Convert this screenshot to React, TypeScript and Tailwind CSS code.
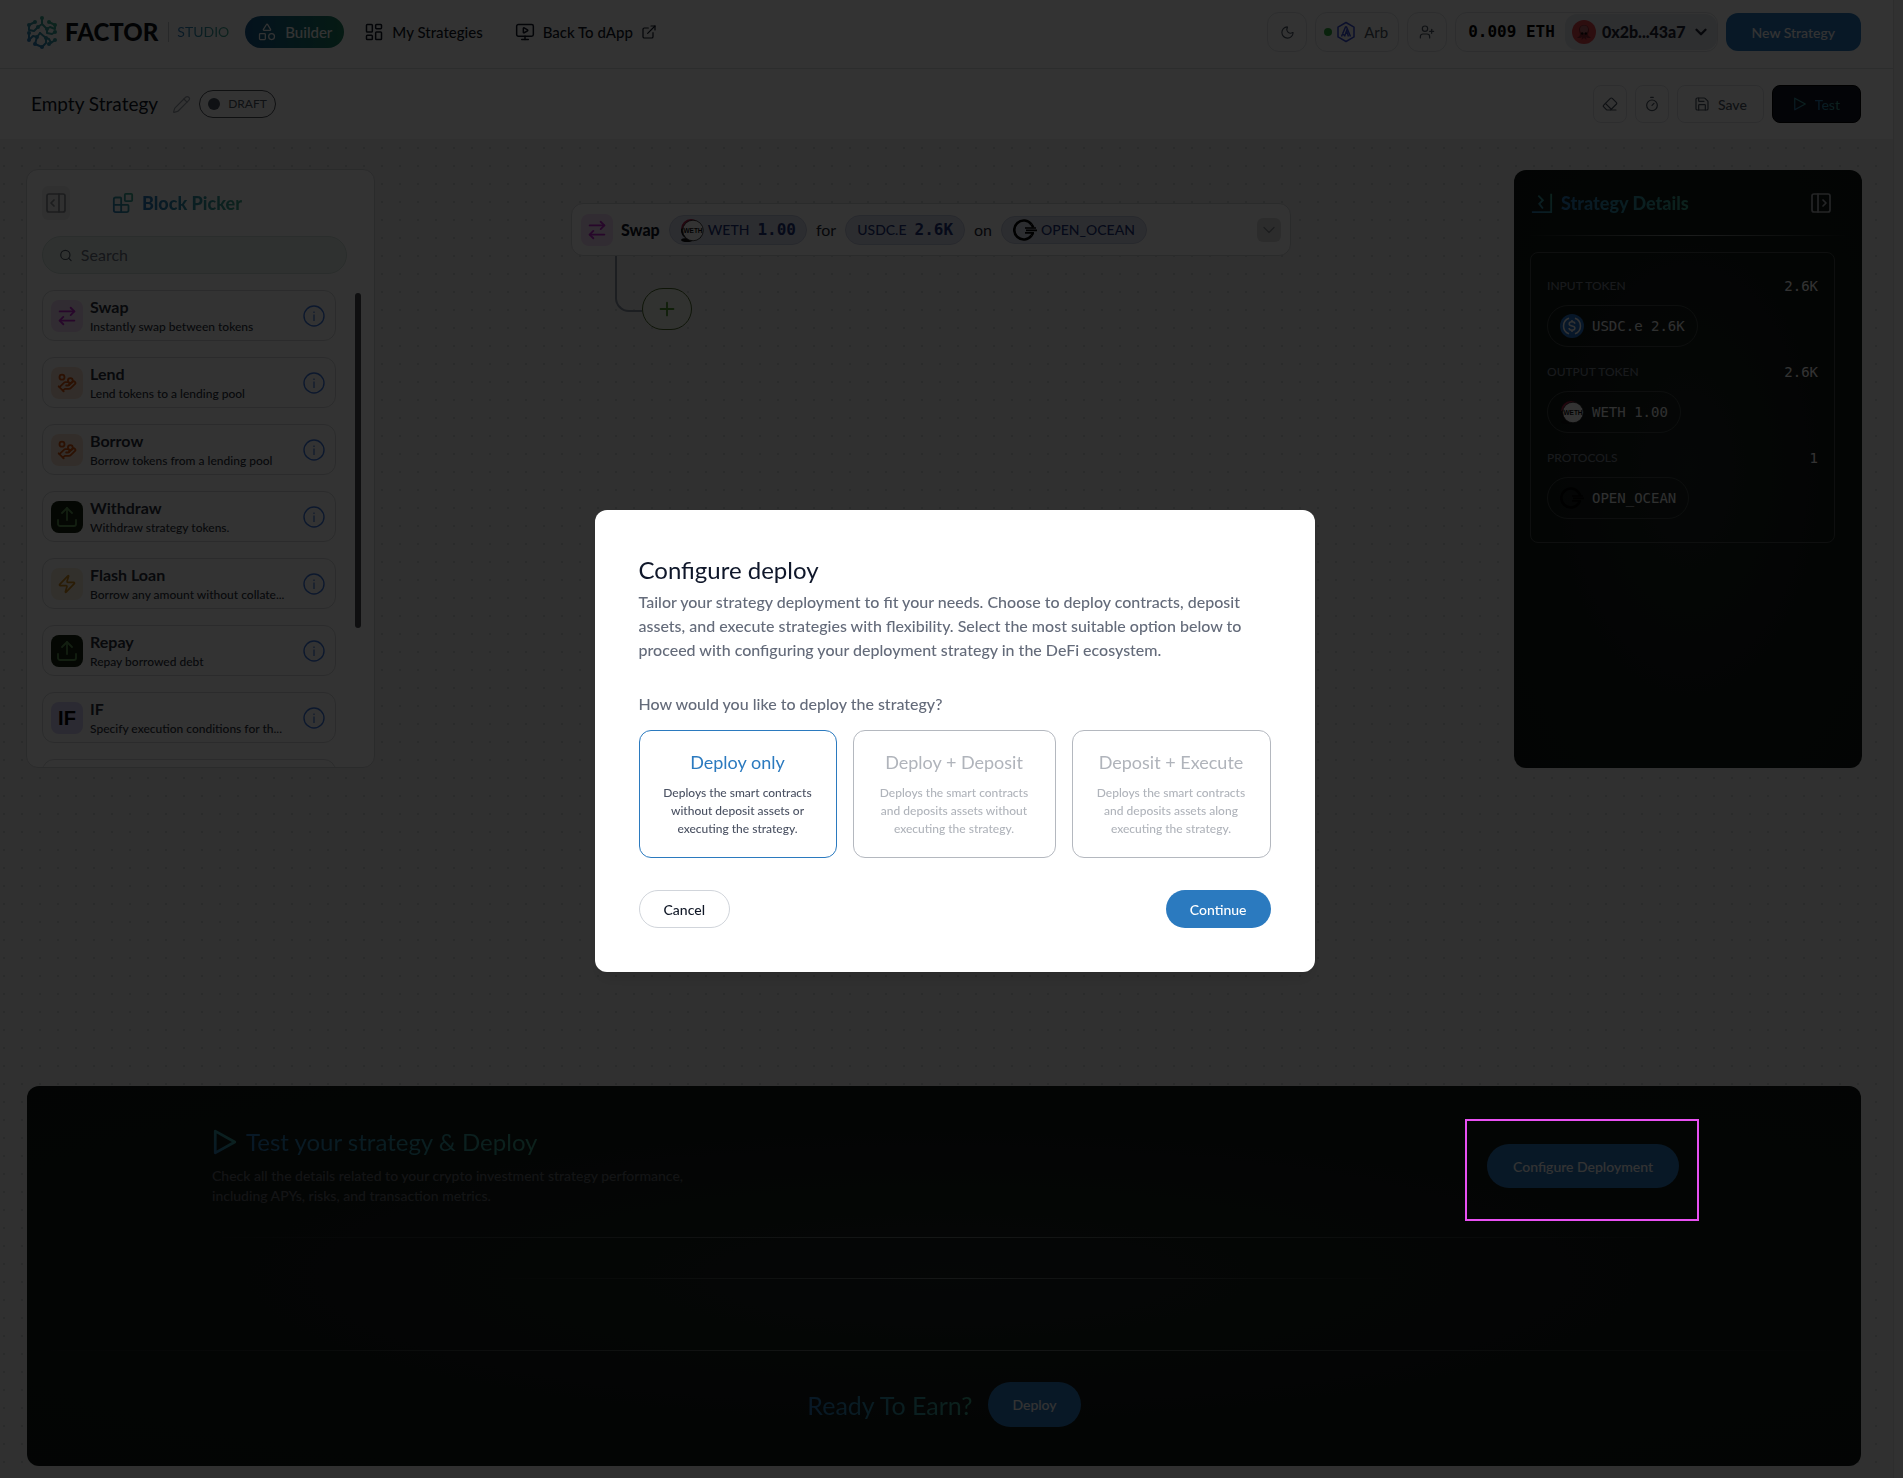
import type { ReactNode } from "react";
import {
  ArrowRightLeft,
  Blocks,
  ChevronDown,
  Eraser,
  ExternalLink,
  HandCoins,
  LayoutDashboard,
  MonitorPlay,
  Moon,
  PanelLeftOpen,
  PanelRightOpen,
  Pencil,
  Plus,
  Save,
  Search,
  Shapes,
  Timer,
  Upload,
  UserPlus,
  Zap,
} from "lucide-react";

const gradientText =
  "bg-gradient-to-r from-[#2b7abf] to-[#3fa98d] bg-clip-text text-transparent";
const mono = "font-['DejaVu_Sans_Mono',monospace]";

function GradientDefs() {
  return (
    <svg width="0" height="0" className="absolute" aria-hidden="true">
      <defs>
        <linearGradient id="brand" gradientUnits="userSpaceOnUse" x1="0" y1="24" x2="24" y2="0">
          <stop offset="0" stopColor="#2b7abf" />
          <stop offset="1" stopColor="#3fb58d" />
        </linearGradient>
      </defs>
    </svg>
  );
}

function LogoMark() {
  const nodes = [
    [15, 2], [8, 6], [22, 6], [2, 9], [28, 9], [2, 17], [28, 16], [2, 24],
    [28, 24], [8, 28], [22, 28], [15, 31], [11, 11], [20, 13], [10, 21], [19, 22],
  ];
  return (
    <svg width="30" height="33" viewBox="0 0 30 33" fill="none" aria-hidden="true">
      <defs>
        <linearGradient id="logo" gradientUnits="userSpaceOnUse" x1="4" y1="30" x2="26" y2="3">
          <stop offset="0" stopColor="#2b7abf" />
          <stop offset="1" stopColor="#3fb58d" />
        </linearGradient>
      </defs>
      <g stroke="url(#logo)" strokeWidth="2" strokeLinecap="round" strokeLinejoin="round">
        <path d="M15 2v6l-4 3M8 6l-6 3v5l5 1 4-4M2 17v7l4-4 4 1 3-4" />
        <path d="M22 6l6 3v4l-5-2-3 2v4l5 1 3-2M28 24l-4 3-2-4-3-1M10 21l-2 7 7 3 4-4v-5" />
        <path d="M15 8l5 5M13 17l6 5" />
      </g>
      <g fill="url(#logo)">
        {nodes.map(([x, y]) => (
          <circle key={`${x}-${y}`} cx={x} cy={y} r="2" />
        ))}
      </g>
    </svg>
  );
}

function ArbIcon() {
  return (
    <svg width="20" height="22" viewBox="0 0 20 22" fill="none" stroke="#3b4fd8" aria-hidden="true">
      <path d="M10 1.500l8 4.600v9.800l-8 4.600-8-4.600V6.100z" strokeWidth="1.500" strokeLinejoin="round" />
      <path d="M5.500 15.500L9.500 6h1L14.500 15.500M8.500 15.500L10.500 10l2 5.500M6.500 11.500l1.500 3" strokeWidth="1.500" />
    </svg>
  );
}

function Avatar() {
  return (
    <svg width="24" height="24" viewBox="0 0 24 24" aria-hidden="true">
      <circle cx="12" cy="12" r="12" fill="#e2464d" />
      <path d="M12 5c-3.200 0-5 2.200-5 5 0 2 1 3 1 4.500S6 17 5 17.500c2 1 4 .5 5-.5l-.5 3 2.500-2 2.500 2-.5-3c1 1 3 1.500 5 .5-1-.5-3-1.500-3-3s1-2.500 1-4.500c0-2.800-1.800-5-5-5z" fill="#8d2b33" />
      <ellipse cx="12" cy="9.500" rx="4" ry="4" fill="#b8666a" />
      <circle cx="10.200" cy="13.500" r="1.200" fill="#14090a" />
      <circle cx="13.800" cy="13.500" r="1.200" fill="#14090a" />
    </svg>
  );
}

function WethIcon() {
  return (
    <svg width="24" height="24" viewBox="0 0 24 24" aria-hidden="true">
      <circle cx="11" cy="11" r="10" fill="#b02049" />
      <path d="M1 11a10 10 0 0 0 6 10l14-1-4-16z" fill="#111" />
      <ellipse cx="7" cy="22" rx="6" ry="2" fill="#111" />
      <circle cx="13" cy="12.500" r="10.300" fill="#fff" stroke="#222" strokeWidth=".8" />
      <text x="13" y="15" textAnchor="middle" fontSize="6.500" fontWeight="700" fontFamily="Liberation Sans, sans-serif" fill="#111">
        WETH
      </text>
    </svg>
  );
}

function UsdcIcon() {
  return (
    <svg width="24" height="24" viewBox="0 0 24 24" fill="none" stroke="#fff" strokeWidth="1.500" aria-hidden="true">
      <circle cx="12" cy="12" r="12" fill="#2775ca" stroke="none" />
      <path d="M9 4.200a8.300 8.300 0 0 0 0 15.600M15 4.200a8.300 8.300 0 0 1 0 15.600" />
      <path d="M14.800 9.800c0-1.300-1.200-2-2.800-2s-2.800.8-2.800 2.100c0 2.900 5.700 1.300 5.700 4.200 0 1.300-1.200 2.100-2.900 2.100s-2.900-.8-2.900-2.100M12 6v1.800M12 16.200V18" />
    </svg>
  );
}

function OceanIcon() {
  return (
    <svg width="24" height="24" viewBox="0 0 24 24" fill="none" stroke="#000" aria-hidden="true">
      <path d="M18.500 6.500a9.500 9.500 0 1 0 0 11" strokeWidth="2.600" />
      <path d="M18.500 6.500q1.500 2 1.700 3M18.500 17.500q1.200-1.500 1.500-2.500" strokeWidth="2.600" />
      <path d="M12 10h11M12 14.800h9M13 12.400h11" strokeWidth="1.700" />
    </svg>
  );
}

function DetailsIcon() {
  return (
    <svg width="22" height="22" viewBox="0 0 24 24" fill="none" stroke="url(#brand)" strokeWidth="2" aria-hidden="true">
      <path d="M1 22h21V2M8 4l5 5-4 4 4 5" />
    </svg>
  );
}

function InfoIcon() {
  return (
    <svg width="22" height="22" viewBox="0 0 22 22" fill="none" stroke="#3f78e0" aria-hidden="true">
      <circle cx="11" cy="11" r="10" strokeWidth="1.400" />
      <path d="M11 9.500V16M11 6.500v1.500" strokeWidth="1.200" />
    </svg>
  );
}

function PlayOutline({ size, width }: { size: number; width: number }) {
  return (
    <svg width={size} height={size} viewBox="0 0 24 24" fill="none" stroke="url(#brand)" strokeWidth={width} strokeLinejoin="round" aria-hidden="true">
      <path d="M3 2l18 10L3 22z" />
    </svg>
  );
}

const iconButton =
  "flex items-center justify-center border border-[#dfe2e6] bg-white text-[#4b5563]";

function Header() {
  return (
    <header className="flex h-[69px] items-center border-b border-[#dcdee2] bg-white pb-1 pl-[27px] pr-8">
      <div className="flex items-center">
        <LogoMark />
        <span className="ml-2 text-[24px] leading-8 font-black text-[#0d1117]">FACTOR</span>
        <span className="ml-[10px] h-5 w-px bg-[#c3c7cd]" />
        <span className={`ml-2 text-[14px] leading-5 ${gradientText}`}>STUDIO</span>
      </div>
      <nav className="ml-4 flex items-center text-[15px] font-medium text-[#111827]">
        <a href="#builder" className="flex h-8 items-center gap-2 rounded-full bg-gradient-to-r from-[#175a90] to-[#1f8262] px-3 text-white">
          <Shapes size={20} strokeWidth={1.500} />
          Builder
        </a>
        <a href="#strategies" className="ml-5 flex items-center gap-2">
          <LayoutDashboard size={20} strokeWidth={1.800} />
          My Strategies
        </a>
        <a href="#dapp" className="ml-8 flex items-center gap-2">
          <MonitorPlay size={20} strokeWidth={1.800} />
          Back To dApp
          <ExternalLink size={16} strokeWidth={1.800} />
        </a>
      </nav>
      <div className="ml-auto flex items-center gap-2">
        <button aria-label="Toggle theme" className={`${iconButton} h-10 w-10 rounded-xl`}>
          <Moon size={15} strokeWidth={1.800} />
        </button>
        <button className={`${iconButton} h-10 gap-1 rounded-xl px-2 text-[15px]`}>
          <span className="h-2 w-2 rounded-full bg-[#2fa83c]" />
          <ArbIcon />
          <span className="ml-1 pr-[2px]">Arb</span>
        </button>
        <button aria-label="Add user" className={`${iconButton} h-10 w-10 rounded-xl`}>
          <UserPlus size={16} strokeWidth={1.800} />
        </button>
        <div className="flex h-10 items-center rounded-xl border border-[#dfe2e6] bg-white pl-3">
          <span className={`${mono} pr-[10px] text-[16px] font-bold text-black`}>0.009 ETH</span>
          <button className="flex h-9 items-center gap-[6px] rounded-xl bg-[#e4e8ef] px-[7px] text-[16px] font-black text-[#1f2333]">
            <Avatar />
            <span>0x2b...43a7</span>
            <ChevronDown size={18} strokeWidth={3} />
          </button>
        </div>
        <button className="h-[38px] rounded-xl bg-[#2b7abf] px-[26px] text-[14px] font-medium text-white">New Strategy</button>
      </div>
    </header>
  );
}

function TitleBar() {
  return (
    <div className="flex h-[70px] items-center bg-white pl-[31px] pr-8">
      <h1 className="text-[19px] leading-6 text-[#111827]">Empty Strategy</h1>
      <button aria-label="Rename strategy" className="ml-[14px] text-[#9aa0aa]">
        <Pencil size={19} strokeWidth={1.500} />
      </button>
      <span className="ml-2 flex h-7 items-center gap-2 rounded-full border border-[#4b5058] px-2 text-[12px] text-[#4b5563]">
        <span className="h-3 w-3 rounded-full bg-[#4b5563]" />
        DRAFT
      </span>
      <div className="ml-auto flex items-center gap-2 text-[14px] font-medium">
        <button aria-label="Clear" className={`${iconButton} h-[38px] w-[34px] rounded-lg`}>
          <Eraser size={16} strokeWidth={1.800} />
        </button>
        <button aria-label="History" className={`${iconButton} h-[38px] w-[34px] rounded-lg`}>
          <Timer size={16} strokeWidth={1.800} />
        </button>
        <button className={`${iconButton} h-[38px] gap-2 rounded-lg px-4`}>
          <Save size={16} strokeWidth={1.800} />
          Save
        </button>
        <button className="flex h-[38px] items-center gap-2 rounded-lg border border-black bg-[#111827] px-5">
          <PlayOutline size={14} width={2} />
          <span className={gradientText}>Test</span>
        </button>
      </div>
    </div>
  );
}

type Block = { name: string; text: string; tile: string; icon: ReactNode };

const upload = <Upload size={24} strokeWidth={1.800} />;
const coins = <HandCoins size={20} strokeWidth={2.200} />;

const blocks: Block[] = [
  { name: "Swap", text: "Instantly swap between tokens", tile: "bg-[#f5d9f7] text-[#c026d3]", icon: <ArrowRightLeft size={22} strokeWidth={2} /> },
  { name: "Lend", text: "Lend tokens to a lending pool", tile: "bg-[#fbe2d0] text-[#d9560f]", icon: coins },
  { name: "Borrow", text: "Borrow tokens from a lending pool", tile: "bg-[#fbe2d0] text-[#d9560f]", icon: coins },
  { name: "Withdraw", text: "Withdraw strategy tokens.", tile: "bg-[#14240f] text-[#5f9a55]", icon: upload },
  { name: "Flash Loan", text: "Borrow any amount without collate...", tile: "bg-[#f8efdd] text-[#d08a1d]", icon: <Zap size={20} strokeWidth={2} /> },
  { name: "Repay", text: "Repay borrowed debt", tile: "bg-[#14240f] text-[#5f9a55]", icon: upload },
  {
    name: "IF",
    text: "Specify execution conditions for th...",
    tile: "bg-[#d7d0f7] text-black",
    icon: <span className="font-['Liberation_Sans',sans-serif] text-[20px] font-bold">IF</span>,
  },
];

function BlockPicker() {
  return (
    <aside className="flex h-[599px] w-[349px] shrink-0 flex-col overflow-hidden rounded-xl border border-[#d3d5d8] bg-white px-[15px] pt-4">
      <div className="flex items-center gap-[42px]">
        <button aria-label="Collapse block picker" className="flex h-[34px] w-7 items-center justify-center rounded-md bg-[#efefef] text-[#8b8f95]">
          <PanelRightOpen size={24} strokeWidth={1.700} />
        </button>
        <h2 className="flex items-center gap-2 text-[18px] font-black">
          <Blocks size={22} stroke="url(#brand)" />
          <span className={gradientText}>Block Picker</span>
        </h2>
      </div>
      <label className="mt-4 flex h-[38px] w-[305px] items-center gap-2 rounded-full border border-[#cfe0d9] bg-[#ebf6f1] pl-4 text-[#4b5563]">
        <Search size={15} strokeWidth={2} />
        <input
          type="text"
          aria-label="Search blocks"
          placeholder="Search"
          className="w-full bg-transparent text-[16px] outline-none placeholder:text-[#6b7280]"
        />
      </label>
      <div className="mt-4 flex min-h-0 flex-1 gap-[19px]">
        <ul className="flex w-[294px] shrink-0 flex-col gap-4 overflow-hidden">
          {blocks.map((b) => (
            <li key={b.name} className="flex h-[51px] shrink-0 items-center gap-[7px] rounded-xl border border-[#d6d8db] px-2 pr-[10px]">
              <span className={`flex h-8 w-8 shrink-0 items-center justify-center rounded-lg ${b.tile}`}>{b.icon}</span>
              <span className="flex min-w-0 flex-1 flex-col gap-[2px] text-[#2b313c]">
                <span className="text-[16px] leading-5 font-bold">{b.name}</span>
                <span className="text-[12px] leading-4 font-medium whitespace-nowrap">{b.text}</span>
              </span>
              <button aria-label={`About ${b.name}`}>
                <InfoIcon />
              </button>
            </li>
          ))}
          <li aria-hidden="true" className="h-[51px] shrink-0 rounded-xl border border-[#d6d8db]" />
        </ul>
        <div className="mt-[3px] h-[335px] w-[6px] shrink-0 rounded-full bg-[#4a4d52]" />
      </div>
    </aside>
  );
}

const nodePill =
  "flex items-center gap-1 rounded-full border border-[#c4cae0] bg-[#dde1f0] text-[14px] font-medium text-[#22347c]";

function SwapNode() {
  return (
    <section className="w-[720px]">
      <div className="flex h-[53px] items-center rounded-xl border border-[#d3d5d8] bg-white px-[9px]">
        <span className="flex h-8 w-8 items-center justify-center rounded-lg bg-[#f5d9f7] text-[#c026d3]">
          <ArrowRightLeft size={22} strokeWidth={2} />
        </span>
        <span className="ml-2 text-[16px] font-black text-[#111827]">Swap</span>
        <span className={`${nodePill} ml-[9px] h-[30px] px-[10px]`}>
          <WethIcon />
          WETH <b className={`${mono} ml-1 text-[16px]`}>1.00</b>
        </span>
        <span className="mx-[9px] text-[16px] text-[#1f2937]">for</span>
        <span className={`${nodePill} h-[30px] px-[11px]`}>
          USDC.E <b className={`${mono} ml-1 text-[16px]`}>2.6K</b>
        </span>
        <span className="mx-[9px] text-[16px] text-[#1f2937]">on</span>
        <span className={`${nodePill} h-7 px-[11px]`}>
          <OceanIcon />
          OPEN_OCEAN
        </span>
        <button aria-label="Expand" className="ml-auto flex h-6 w-6 items-center justify-center rounded-md bg-[#dcdcdc] text-[#8b8f95]">
          <ChevronDown size={20} strokeWidth={1.500} />
        </button>
      </div>
      <div className="flex pl-[44px]">
        <span className="h-[56px] w-[27px] rounded-bl-[14px] border-b-2 border-l-2 border-[#8a94a6]" />
        <button aria-label="Add block" className="mt-8 flex h-[42px] w-[50px] items-center justify-center rounded-full border border-[#4b6b2a] bg-[#f4f8ee] text-[#4f9a2f]">
          <Plus size={22} strokeWidth={2} />
        </button>
      </div>
    </section>
  );
}

const panelGlow = "bg-[radial-gradient(ellipse_at_center,#1c2321_0%,#121a17_60%,#0f1814_100%)]";

function DetailGroup({ label, value, icon, text }: { label: string; value: string; icon: ReactNode; text: string }) {
  return (
    <div className="h-[86px]">
      <div className="flex h-6 items-center justify-between">
        <span className="text-[12px] font-medium text-[#7b828e]">{label}</span>
        <span className={`${mono} text-[14px] text-white`}>{value}</span>
      </div>
      <div className="mt-[7px] flex">
        <span className={`${mono} flex h-[42px] items-center gap-2 rounded-full border border-[#414846] px-3 text-[14px] text-[#eceef0]`}>
          {icon}
          {text}
        </span>
      </div>
    </div>
  );
}

function StrategyDetails() {
  return (
    <aside className={`mt-px h-[598px] w-[348px] shrink-0 rounded-xl pt-[21px] ${panelGlow}`}>
      <div className="flex items-center pl-[17px] pr-[29px]">
        <DetailsIcon />
        <h2 className={`ml-2 text-[18px] leading-6 font-black ${gradientText}`}>Strategy Details</h2>
        <button aria-label="Collapse details" className="ml-auto text-[#b4b7bd]">
          <PanelLeftOpen size={24} strokeWidth={1.700} />
        </button>
      </div>
      <div className="mx-3 mt-5 h-px bg-gradient-to-r from-transparent via-[#8b9290] to-transparent" />
      <div className="mt-4 mr-[27px] ml-4 h-[291px] rounded-lg border border-[#454c4a] px-4 pt-[21px]">
        <DetailGroup label="INPUT TOKEN" value="2.6K" icon={<UsdcIcon />} text="USDC.e 2.6K" />
        <DetailGroup label="OUTPUT TOKEN" value="2.6K" icon={<WethIcon />} text="WETH 1.00" />
        <DetailGroup label="PROTOCOLS" value="1" icon={<OceanIcon />} text="OPEN_OCEAN" />
      </div>
    </aside>
  );
}

const fade = "h-px bg-gradient-to-r from-transparent via-[#6c7472] to-transparent";

function DeployPanel() {
  return (
    <section className={`mx-px h-[380px] rounded-xl pt-10 ${panelGlow}`}>
      <div className="mx-[182px] flex items-center justify-between">
        <div className="pl-[3px]">
          <h2 className="flex items-center gap-2 text-[24px] leading-8">
            <PlayOutline size={26} width={2.500} />
            <span className={gradientText}>Test your strategy &amp; Deploy</span>
          </h2>
          <p className="mt-2 max-w-[490px] text-[14px] leading-5 font-medium text-[#62656c]">
            Check all the details related to your crypto investment strategy performance, including APYs, risks, and transaction metrics.
          </p>
        </div>
        <div className="relative">
          <button className="h-11 rounded-full bg-[#2b7abf] px-[26px] text-[14px] font-medium text-white">Configure Deployment</button>
          <span className="pointer-events-none absolute -top-[25px] -right-5 -bottom-[33px] -left-[22px] z-50 border-2 border-[#e850f2]" />
        </div>
      </div>
      <div className={`mx-[182px] mt-[31px] ${fade}`} />
      <div className={`mx-auto mt-10 w-1/2 ${fade}`} />
      <div className={`mx-auto mt-[71px] ${fade}`} />
      <div className="mt-[31px] flex items-center justify-center gap-4">
        <h2 className={`text-[25px] leading-8 ${gradientText}`}>Ready To Earn?</h2>
        <button className="h-[45px] rounded-full bg-[#2b7abf] px-6 text-[14px] font-medium text-white">Deploy</button>
      </div>
    </section>
  );
}

const options = [
  { title: "Deploy only", text: "Deploys the smart contracts without deposit assets or executing the strategy.", active: true },
  { title: "Deploy + Deposit", text: "Deploys the smart contracts and deposits assets without executing the strategy.", active: false },
  { title: "Deposit + Execute", text: "Deploys the smart contracts and deposits assets along executing the strategy.", active: false },
];

function DeployDialog() {
  return (
    <div className="fixed inset-0 z-40 flex items-center justify-center bg-black/80 pt-1 pl-[6px]">
      <div role="dialog" aria-modal="true" aria-labelledby="dialog-title" className="w-[720px] rounded-xl bg-white p-11 shadow-lg">
        <h2 id="dialog-title" className="text-[24px] leading-8 text-[#0f172a]">Configure deploy</h2>
        <p className="mt-1 text-[16px] leading-6 font-medium text-[#646b7a]">
          Tailor your strategy deployment to fit your needs. Choose to deploy contracts, deposit assets, and execute strategies with
          flexibility. Select the most suitable option below to proceed with configuring your deployment strategy in the DeFi ecosystem.
        </p>
        <p className="mt-[30px] text-[16px] leading-6 font-medium text-[#646b7a]">How would you like to deploy the strategy?</p>
        <div className="mt-[14px] grid grid-cols-[198px_1fr_199px] gap-4">
          {options.map((o) => (
            <button
              key={o.title}
              aria-pressed={o.active}
              className={`flex h-32 flex-col items-center rounded-xl border px-5 pt-[17px] ${
                o.active ? "border-[#2b7abf]" : "border-[#b4b8bf]"
              }`}
            >
              <span className={`text-[18px] leading-7 ${o.active ? "text-[#2b7abf]" : "text-[#b0b4bb]"}`}>{o.title}</span>
              <span className={`mt-2 text-[12px] leading-[18px] font-medium ${o.active ? "text-[#4b5263]" : "text-[#b0b4bb]"}`}>{o.text}</span>
            </button>
          ))}
        </div>
        <div className="mt-8 flex justify-between text-[14px] font-medium">
          <button className="h-[38px] rounded-full border border-[#d1d5db] px-6 text-[#111827]">Cancel</button>
          <button className="h-[38px] rounded-full bg-[#2b7abf] px-6 text-white">Continue</button>
        </div>
      </div>
    </div>
  );
}

export default function App() {
  return (
    <div className="flex min-h-screen bg-[#f0f0f0] font-['Lato',sans-serif]">
      <GradientDefs />
      <div className="flex min-w-0 flex-1 flex-col">
        <Header />
        <TitleBar />
        <main className="flex flex-1 flex-col justify-between bg-[radial-gradient(circle,#d2d4d6_1px,transparent_1.5px)] bg-[length:18px_18px] bg-[position:-5px_0px] pt-[30px] pr-[31px] pb-3 pl-[26px]">
          <div className="flex">
            <BlockPicker />
            <div className="flex flex-1 justify-center pt-[34px] pr-[27px]">
              <SwapNode />
            </div>
            <StrategyDetails />
          </div>
          <DeployPanel />
        </main>
      </div>
      <div className="w-[10px] border-l border-[#e0e0e0] bg-[#f5f5f5]" />
      <DeployDialog />
    </div>
  );
}
